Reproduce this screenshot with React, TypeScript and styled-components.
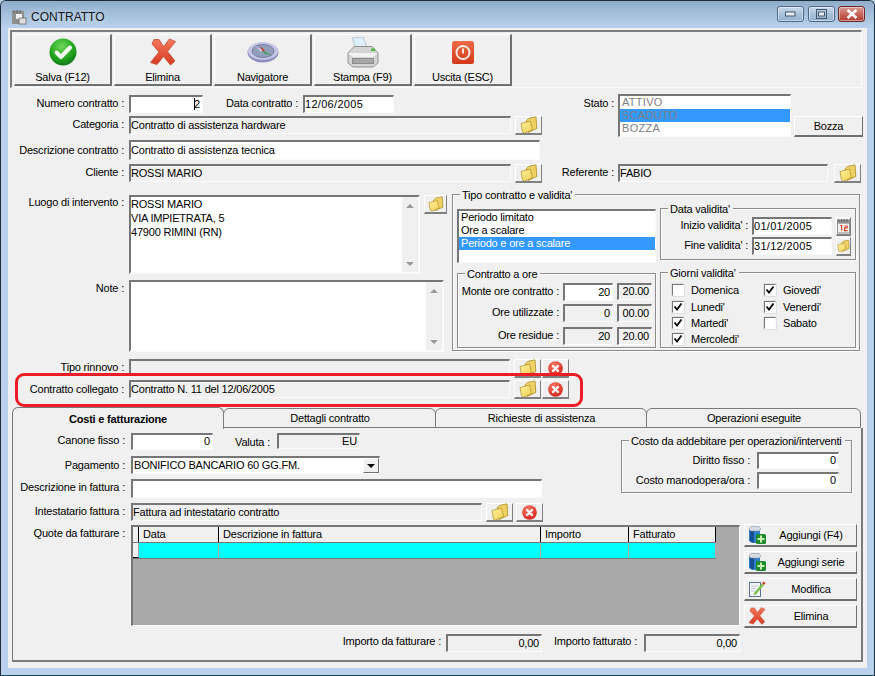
import React from 'react';
import styled, { createGlobalStyle } from 'styled-components';

const GlobalStyle = createGlobalStyle`
  html, body { margin: 0; padding: 0; background: #b9d1ea; }
  body {
    font-family: "Liberation Sans", Arial, sans-serif;
    font-size: 11px;
    letter-spacing: -0.2px;
    color: #000;
  }
  * { box-sizing: border-box; }
`;

const Window = styled.div`
  width: 875px;
  height: 676px;
  display: flex;
  flex-direction: column;
  background: #b9d1ea;
  border: 1px solid #1c2c3a;
  border-bottom-color: #0f4f5c;
  border-radius: 6px 6px 0 0;
  overflow: hidden;
`;

const TitleBar = styled.div`
  height: 27px;
  flex: none;
  display: flex;
  align-items: center;
  padding: 4px 9px 0 10px;
  background: linear-gradient(#8eabc9, #a3bed9 45%, #b9d1ea);
`;

const TitleText = styled.div`
  margin-left: 4px;
  flex: 1;
  font-size: 12px;
  letter-spacing: 0;
  color: #101820;
  text-shadow: 0 0 6px #dfeaf5;
`;

const CaptionButton = styled.div<{ $close?: boolean }>`
  width: 27px;
  height: 16px;
  margin-left: ${(p) => (p.$close ? '3px' : '4px')};
  margin-top: -6px;
  display: flex;
  align-items: center;
  justify-content: center;
  border: 1px solid ${(p) => (p.$close ? '#6b2a2a' : '#4f6a88')};
  border-radius: 3px;
  background: ${(p) =>
    p.$close
      ? 'linear-gradient(#d99c94, #c8675d 50%, #b03a30)'
      : 'linear-gradient(#c9daea, #a9c1da 50%, #94b0cf)'};
  box-shadow: inset 0 0 0 1px rgba(255, 255, 255, 0.45);
`;

const Client = styled.div`
  width: 859px;
  height: 640px;
  margin-left: 7px;
  background: #f0f0f0;
  display: flex;
  flex-direction: column;
  padding-top: 2px;
`;

const Toolbar = styled.div`
  width: 852px;
  height: 58px;
  margin-left: 2px;
  flex: none;
  display: flex;
  gap: 2px;
  padding: 2px 0 0 2px;
  border-top: 2px solid #7e7e7e;
  border-left: 2px solid #7e7e7e;
  border-right: 1px solid #fbfbfb;
  border-bottom: 1px solid #fbfbfb;
`;

const ToolButton = styled.div`
  width: 98px;
  height: 52px;
  display: flex;
  flex-direction: column;
  align-items: center;
  border-top: 1px solid #fff;
  border-left: 1px solid #fff;
  border-right: 2px solid #707070;
  border-bottom: 2px solid #707070;
`;

const ToolIcon = styled.div`
  height: 35px;
  display: flex;
  align-items: center;
  justify-content: center;
`;

const ToolLabel = styled.div`
  line-height: 13px;
  margin-top: 2px;
`;

const UpperGrid = styled.div`
  display: flex;
  margin-top: 6px;
  flex: none;
`;

const LeftColumn = styled.div`
  width: 537px;
  display: flex;
  flex-direction: column;
`;

const RightColumn = styled.div`
  flex: 1;
  display: flex;
  flex-direction: column;
`;

const Row = styled.div<{ $h: number; $mt?: number }>`
  display: flex;
  align-items: flex-start;
  height: ${(p) => p.$h}px;
  margin-top: ${(p) => p.$mt ?? 0}px;
  flex: none;
  position: relative;
`;

const Label = styled.div<{ $w: number; $gap?: number; $top?: number }>`
  width: ${(p) => p.$w}px;
  margin-right: ${(p) => p.$gap ?? 5}px;
  margin-top: ${(p) => p.$top ?? 1}px;
  text-align: right;
  white-space: nowrap;
  line-height: 15px;
  flex: none;
`;

const Field = styled.div<{
  $w: number;
  $h: number;
  $ro?: boolean;
  $right?: boolean;
  $ml?: number;
  $pl?: number;
  $wide?: boolean;
}>`
  width: ${(p) => p.$w}px;
  height: ${(p) => p.$h}px;
  margin-left: ${(p) => p.$ml ?? 0}px;
  flex: none;
  background: ${(p) => (p.$ro ? '#f0f0f0' : '#fff')};
  border-style: solid;
  border-width: 2px 1px 1px 2px;
  border-color: #767676 #fbfbfb #fbfbfb #767676;
  padding: 0 ${(p) => (p.$right ? '2px' : '0')} 0 ${(p) => p.$pl ?? 0}px;
  text-align: ${(p) => (p.$right ? 'right' : 'left')};
  line-height: ${(p) => p.$h - 4}px;
  letter-spacing: ${(p) => (p.$wide ? '0.3px' : 'inherit')};
  white-space: nowrap;
  overflow: hidden;
  position: relative;
`;

const Caret = styled.span`
  border-left: 1px solid #000;
  margin-right: -1px;
`;

const IconButton = styled.div<{ $w?: number; $h?: number; $ml?: number }>`
  width: ${(p) => p.$w ?? 27}px;
  height: ${(p) => p.$h ?? 19}px;
  margin-left: ${(p) => p.$ml ?? 4}px;
  flex: none;
  display: flex;
  align-items: center;
  justify-content: center;
  border-top: 1px solid #fff;
  border-left: 1px solid #fff;
  border-right: 1px solid #808080;
  border-bottom: 2px solid #808080;
`;

const ListBox = styled.div<{ $w: number; $h: number; $mt?: number }>`
  width: ${(p) => p.$w}px;
  height: ${(p) => p.$h}px;
  margin-top: ${(p) => p.$mt ?? 0}px;
  flex: none;
  background: #fff;
  border-style: solid;
  border-width: 2px 1px 1px 2px;
  border-color: #767676 #fbfbfb #fbfbfb #767676;
`;

const ListItem = styled.div<{ $sel?: boolean; $dim?: boolean }>`
  height: 13px;
  line-height: 13px;
  padding-left: 2px;
  white-space: nowrap;
  letter-spacing: ${(p) => (p.$dim ? '0.3px' : 'inherit')};
  background: ${(p) => (p.$sel ? '#3399ff' : 'transparent')};
  color: ${(p) => (p.$dim ? '#808080' : p.$sel ? '#fff' : '#000')};
`;

const TextButton = styled.div<{ $w: number; $h: number; $ml?: number }>`
  width: ${(p) => p.$w}px;
  height: ${(p) => p.$h}px;
  margin-left: ${(p) => p.$ml ?? 0}px;
  align-self: flex-end;
  flex: none;
  display: flex;
  align-items: center;
  justify-content: center;
  border-top: 1px solid #fff;
  border-left: 1px solid #fff;
  border-right: 1px solid #707070;
  border-bottom: 2px solid #707070;
`;

const StatoRow = styled.div`
  display: flex;
  align-items: flex-start;
  height: 43px;
`;

const MiddleGrid = styled.div`
  display: flex;
  margin-top: 11px;
  flex: none;
`;

const MiddleLeft = styled.div`
  width: 444px;
  display: flex;
  flex-direction: column;
  padding-top: 1px;
`;

const MemoBox = styled.div<{ $w: number; $h: number }>`
  width: ${(p) => p.$w}px;
  height: ${(p) => p.$h}px;
  flex: none;
  display: flex;
  background: #fff;
  border-style: solid;
  border-width: 2px;
  border-color: #767676 #fbfbfb #fbfbfb #767676;
`;

const MemoText = styled.div`
  flex: 1;
  padding-left: 0;
  line-height: 14px;
  white-space: nowrap;
`;

const ScrollTrack = styled.div`
  width: 16px;
  background: #f0f0f0;
  display: flex;
  flex-direction: column;
  justify-content: space-between;
  align-items: center;
  padding: 7px 0 6px;
`;

const ScrollArrow = styled.div<{ $down?: boolean }>`
  width: 0;
  height: 0;
  border-left: 4px solid transparent;
  border-right: 4px solid transparent;
  border-bottom: ${(p) => (p.$down ? '0' : '4px solid #9a9a9a')};
  border-top: ${(p) => (p.$down ? '4px solid #9a9a9a' : '0')};
`;

const GroupBox = styled.div<{ $w: number; $h: number; $ml?: number; $mt?: number }>`
  position: relative;
  width: ${(p) => p.$w}px;
  height: ${(p) => p.$h}px;
  margin-left: ${(p) => p.$ml ?? 0}px;
  margin-top: ${(p) => p.$mt ?? 0}px;
  flex: none;
  border: 1px solid #8c8c8c;
  box-shadow: 1px 1px 0 #fbfbfb, inset 1px 1px 0 #fbfbfb;
`;

const GroupTitle = styled.div`
  position: absolute;
  left: 7px;
  top: -7px;
  padding: 0 3px 0 2px;
  line-height: 14px;
  background: #f0f0f0;
  white-space: nowrap;
`;

const TipoInner = styled.div`
  display: flex;
  gap: 4px;
  padding-left: 4px;
`;

const TipoColumn = styled.div`
  display: flex;
  flex-direction: column;
`;

const OreBody = styled.div`
  display: flex;
  flex-direction: column;
  padding-top: 9px;
`;

const DataBody = styled.div`
  display: flex;
  flex-direction: column;
  padding-top: 8px;
`;

const GiorniGrid = styled.div`
  display: grid;
  grid-template-columns: 92px 80px;
  grid-template-rows: repeat(4, 16.4px);
  grid-auto-flow: column;
  padding: 9px 0 0 11px;
`;

const CheckRow = styled.div`
  display: flex;
  align-items: center;
  gap: 7px;
  white-space: nowrap;
`;

const CheckBox = styled.div`
  width: 12px;
  height: 12px;
  background: #fff;
  border-style: solid;
  border-width: 1px;
  border-color: #767676 #fbfbfb #fbfbfb #767676;
  display: flex;
  align-items: center;
  justify-content: center;
  box-shadow: 0 0 0 0.5px #d0d0d0;
`;

const Annotation = styled.div`
  position: absolute;
  left: 7px;
  top: -7px;
  width: 568px;
  height: 34px;
  border: 3px solid #ee1c25;
  border-radius: 9px;
  pointer-events: none;
  z-index: 2;
`;

const TabStrip = styled.div`
  display: flex;
  margin: 9px 0 0 4px;
  height: 21px;
  flex: none;
  position: relative;
`;

const Tab = styled.div<{ $w: number; $active?: boolean }>`
  width: ${(p) => p.$w}px;
  display: flex;
  align-items: center;
  justify-content: center;
  flex: none;
  border: 1px solid #7b7b7b;
  border-bottom: ${(p) => (p.$active ? '0' : '1px solid #7b7b7b')};
  border-radius: 6px 6px 0 0;
  font-weight: ${(p) => (p.$active ? 700 : 400)};
  background: #f0f0f0;
  ${(p) =>
    p.$active
      ? 'height: 22px; position: relative; z-index: 1; padding-top: 1px;'
      : 'margin-left: -1px; padding-left: 1px; padding-bottom: 1px; margin-top: 1px; height: 20px;'}
`;

const TabPane = styled.div`
  width: 851px;
  height: 234px;
  margin-left: 4px;
  flex: none;
  border-left: 1px solid #7b7b7b;
  border-right: 2px solid #7b7b7b;
  border-bottom: 2px solid #7b7b7b;
  display: flex;
  flex-direction: column;
  padding-top: 5px;
`;

const PaneTop = styled.div`
  display: flex;
  flex: none;
`;

const PaneLeft = styled.div`
  width: 608px;
  display: flex;
  flex-direction: column;
`;

const CostBody = styled.div`
  display: flex;
  flex-direction: column;
  padding-top: 11px;
`;

const DropButton = styled.div`
  position: absolute;
  right: 0;
  top: 0;
  width: 16px;
  height: 15px;
  display: flex;
  align-items: center;
  justify-content: center;
  background: #f0f0f0;
  border-right: 1px solid #707070;
  border-bottom: 1px solid #707070;
  border-top: 1px solid #fff;
  border-left: 1px solid #fff;
`;

const DropArrow = styled.div`
  width: 0;
  height: 0;
  border-left: 4px solid transparent;
  border-right: 4px solid transparent;
  border-top: 4px solid #000;
`;

const QuoteRow = styled.div`
  display: flex;
  align-items: flex-start;
  margin-top: 3px;
  flex: none;
`;

const GridArea = styled.div`
  width: 609px;
  height: 101px;
  flex: none;
  background: #a9a9a9;
  border-style: solid;
  border-width: 2px 1px 1px 2px;
  border-color: #767676 #fbfbfb #fbfbfb #767676;
`;

const GridHead = styled.div`
  display: flex;
  height: 15px;
  width: 583px;
  background: #f0f0f0;
`;

const GridBodyRow = styled.div`
  display: flex;
  height: 17px;
  width: 583px;
  background: #00ffff;
  border-top: 1px solid #767676;
  border-bottom: 1px solid #767676;
`;

const HeadCell = styled.div<{ $w: number }>`
  width: ${(p) => p.$w}px;
  flex: none;
  padding-left: 4px;
  line-height: 15px;
  border-right: 1px solid #000;
  white-space: nowrap;
`;

const BodyCell = styled.div<{ $w: number; $indicator?: boolean }>`
  width: ${(p) => p.$w}px;
  flex: none;
  border-right: 1px solid #a9a9a9;
  background: ${(p) => (p.$indicator ? '#f0f0f0' : 'transparent')};
  ${(p) => (p.$indicator ? 'border-bottom: 1px solid #000;' : '')}
`;

const SideButtons = styled.div`
  display: flex;
  flex-direction: column;
  margin-left: 4px;
  margin-top: -1px;
  gap: 4px;
`;

const SideButton = styled.div`
  width: 113px;
  height: 23px;
  display: flex;
  align-items: center;
  border-top: 1px solid #fff;
  border-left: 1px solid #fff;
  border-right: 1px solid #707070;
  border-bottom: 2px solid #707070;
  padding-left: 3px;
`;

const SideLabel = styled.div`
  flex: 1;
  text-align: center;
  white-space: nowrap;
`;

const TotalsRow = styled.div`
  display: flex;
  align-items: flex-start;
  margin-top: 6px;
  flex: none;
`;

const CheckMark = () => (
  <svg width="10" height="10" viewBox="0 0 10 10">
    <path d="M1.5 4.5L4 7.5L8.5 1.5" fill="none" stroke="#000" strokeWidth="1.8" />
  </svg>
);

const SaveIcon = () => (
  <svg width="28" height="28" viewBox="0 0 28 28">
    <defs>
      <radialGradient id="saveGrad" cx="45%" cy="30%" r="75%">
        <stop offset="0" stopColor="#6fd65a" />
        <stop offset="0.6" stopColor="#22a51e" />
        <stop offset="1" stopColor="#0b6f14" />
      </radialGradient>
    </defs>
    <circle cx="14" cy="14" r="13.5" fill="url(#saveGrad)" />
    <path d="M7.5 14.5L12 19L21 9.5" fill="none" stroke="#f4fbef" strokeWidth="4" strokeLinecap="round" strokeLinejoin="round" />
  </svg>
);

const CrossIcon = ({ size = 28 }: { size?: number }) => (
  <svg width={size} height={size} viewBox="0 0 28 28">
    <defs>
      <linearGradient id="crossGrad" x1="0" y1="0" x2="0" y2="1">
        <stop offset="0" stopColor="#f27a5c" />
        <stop offset="1" stopColor="#d63a22" />
      </linearGradient>
    </defs>
    <path
      d="M5 1.5L10 1.5L14.5 8.5L20.5 1L26.5 3.5L18.5 13.5L26 23L21.5 27L14.5 18.5L8 26.5L1.5 24.5L10 14L3 6Z"
      fill="url(#crossGrad)"
      stroke="#c8452c"
      strokeWidth="0.8"
      strokeLinejoin="round"
    />
  </svg>
);

const CompassIcon = () => (
  <svg width="32" height="22" viewBox="0 0 32 22">
    <ellipse cx="16" cy="11.5" rx="15.5" ry="10" fill="#8f8fc4" />
    <ellipse cx="16" cy="10" rx="15" ry="9" fill="#c6c6e6" />
    <ellipse cx="16" cy="10" rx="11" ry="6.5" fill="#8fa0b8" stroke="#6f6f9f" strokeWidth="0.8" />
    <path d="M8 5L16 9.5L14 11Z" fill="#d0d0e6" />
    <path d="M13 5L18 9.5L15.5 10.5Z" fill="#d83a2a" />
    <path d="M15.5 9.5L26 15L17 12Z" fill="#2a9a3c" />
  </svg>
);

const PrinterIcon = () => (
  <svg width="32" height="31" viewBox="0 0 32 31">
    <path d="M5 1L16 0L20 10L10 14Z" fill="#dff0fb" stroke="#9fb6c8" strokeWidth="0.7" />
    <path d="M1 16L7 9.5H25L31 16V26L26 30H6L1 26Z" fill="#d4d4d4" stroke="#7e7e7e" strokeWidth="0.8" />
    <path d="M1 16H31L26 20H6Z" fill="#f2f2f2" />
    <path d="M5 21H27V27H5Z" fill="#8d8d8d" />
    <path d="M6 23H26M6 25H26" stroke="#cfcfcf" strokeWidth="0.8" />
    <rect x="24" y="11.5" width="4" height="2.5" fill="#58b848" />
  </svg>
);

const PowerIcon = () => (
  <svg width="22" height="23" viewBox="0 0 22 23">
    <defs>
      <linearGradient id="powerGrad" x1="0" y1="0" x2="0" y2="1">
        <stop offset="0" stopColor="#ef6a45" />
        <stop offset="1" stopColor="#d2391a" />
      </linearGradient>
    </defs>
    <rect x="0" y="0" width="22" height="23" rx="2.5" fill="url(#powerGrad)" />
    <circle cx="11" cy="11.5" r="6.5" fill="none" stroke="#fbe7df" strokeWidth="2" />
    <path d="M11 7.5V12.5" stroke="#fbe7df" strokeWidth="2" />
  </svg>
);

const FolderIcon = ({ size = 18 }: { size?: number }) => (
  <svg width={size} height={size} viewBox="0 0 18 18">
    <defs>
      <linearGradient id="folderGrad" x1="0" y1="0" x2="1" y2="1">
        <stop offset="0" stopColor="#fff0a0" />
        <stop offset="1" stopColor="#f2cf52" />
      </linearGradient>
    </defs>
    <path d="M6 5L8.5 2.5L16 0.8L16.8 12.5L8 16.5Z" fill="#efd263" stroke="#a88a2a" strokeWidth="0.8" strokeLinejoin="round" />
    <path d="M1 7.5L10.5 5L12.6 13.5L4.5 17L2.5 16Z" fill="url(#folderGrad)" stroke="#b8962e" strokeWidth="0.8" strokeLinejoin="round" />
  </svg>
);

const ClearIcon = () => (
  <svg width="15" height="15" viewBox="0 0 15 15">
    <defs>
      <radialGradient id="clearGrad" cx="40%" cy="30%" r="75%">
        <stop offset="0" stopColor="#f77c64" />
        <stop offset="1" stopColor="#d3201a" />
      </radialGradient>
    </defs>
    <circle cx="7.5" cy="7.5" r="7.3" fill="url(#clearGrad)" />
    <path d="M5 5L10 10M10 5L5 10" stroke="#fff" strokeWidth="2.4" strokeLinecap="round" />
  </svg>
);

const CalendarIcon = () => (
  <svg width="14" height="16" viewBox="0 0 14 16">
    <rect x="0.5" y="1.5" width="13" height="14" fill="#f4f4f4" stroke="#8a8a8a" />
    <rect x="0.5" y="1.5" width="13" height="4" fill="#8f8f8f" />
    <path d="M2 1V3M5 1V3M8 1V3M11 1V3" stroke="#444" />
    <path d="M3.5 7.5H5V13M8 8H11V10H8V13H11.5" fill="none" stroke="#d8401e" strokeWidth="1.2" />
  </svg>
);

const AddIcon = () => (
  <svg width="18" height="18" viewBox="0 0 18 18">
    <path d="M1 4H12V15L9 17H4L1 15Z" fill="#2f7ec8" />
    <path d="M2 4H6V16H4L2 15Z" fill="#184f94" />
    <path d="M1 3L3 0.5H11L13 3L11 5H3Z" fill="#d6dce4" stroke="#8b95a3" strokeWidth="0.6" />
    <rect x="8" y="8" width="10" height="10" rx="1.5" fill="#1e8a2c" />
    <path d="M13 9.5V16.5M9.5 13H16.5" stroke="#c8f2b0" strokeWidth="2" />
  </svg>
);

const EditIcon = () => (
  <svg width="18" height="18" viewBox="0 0 18 18">
    <rect x="1.5" y="2.5" width="11" height="14" fill="#f4f6fa" stroke="#5a6f9a" />
    <path d="M3 6H10M3 8.5H8M3 11H7" stroke="#c0c8d8" />
    <path d="M6 13L14 3.5L16 5L8 14.5L5.5 15Z" fill="#7cc04a" />
    <path d="M14 3.5L15.5 1.5L17.5 3L16 5Z" fill="#d8402c" />
  </svg>
);

const MinGlyph = () => (
  <svg width="11" height="6" viewBox="0 0 11 6">
    <rect x="0.5" y="1" width="9.5" height="4" fill="#e8eef5" stroke="#45586e" />
  </svg>
);

const MaxGlyph = () => (
  <svg width="11" height="10" viewBox="0 0 11 10">
    <rect x="0.5" y="0.5" width="10" height="9" fill="none" stroke="#45586e" />
    <rect x="2.5" y="3" width="6" height="4" fill="#e8eef5" stroke="#45586e" />
  </svg>
);

const CloseGlyph = () => (
  <svg width="14" height="10" viewBox="0 0 14 10">
    <path d="M2.5 1L11.5 9M11.5 1L2.5 9" stroke="#fff" strokeWidth="2.6" />
  </svg>
);

const AppIcon = () => (
  <svg width="16" height="16" viewBox="0 0 16 16">
    <rect x="1" y="2" width="12" height="13" fill="#8f8f8f" />
    <path d="M3 1V4M6 1V4M9 1V4" stroke="#5a5a5a" />
    <rect x="5" y="5" width="6" height="5" fill="#f6f6f6" />
    <rect x="8" y="9" width="7" height="6" fill="#dcdcdc" stroke="#5f5f5f" strokeWidth="0.7" />
  </svg>
);

const days: { name: string; on: boolean }[] = [
  { name: 'Domenica', on: false },
  { name: "Lunedi'", on: true },
  { name: "Martedi'", on: true },
  { name: "Mercoledi'", on: true },
  { name: "Giovedi'", on: true },
  { name: "Venerdi'", on: true },
  { name: 'Sabato', on: false },
];

const columns = [
  { title: '', w: 6 },
  { title: 'Data', w: 80 },
  { title: 'Descrizione in fattura', w: 322 },
  { title: 'Importo', w: 88 },
  { title: 'Fatturato', w: 87 },
];

const sideButtons = [
  { label: 'Aggiungi (F4)', icon: <AddIcon /> },
  { label: 'Aggiungi serie', icon: <AddIcon /> },
  { label: 'Modifica', icon: <EditIcon /> },
  { label: 'Elimina', icon: <CrossIcon size={18} /> },
];

const App = () => {
  return (
    <Window>
      <GlobalStyle />
      <TitleBar>
        <AppIcon />
        <TitleText>CONTRATTO</TitleText>
        <CaptionButton><MinGlyph /></CaptionButton>
        <CaptionButton><MaxGlyph /></CaptionButton>
        <CaptionButton $close><CloseGlyph /></CaptionButton>
      </TitleBar>
      <Client>
        <Toolbar>
          <ToolButton>
            <ToolIcon><SaveIcon /></ToolIcon>
            <ToolLabel>Salva (F12)</ToolLabel>
          </ToolButton>
          <ToolButton>
            <ToolIcon><CrossIcon /></ToolIcon>
            <ToolLabel>Elimina</ToolLabel>
          </ToolButton>
          <ToolButton>
            <ToolIcon><CompassIcon /></ToolIcon>
            <ToolLabel>Navigatore</ToolLabel>
          </ToolButton>
          <ToolButton>
            <ToolIcon><PrinterIcon /></ToolIcon>
            <ToolLabel>Stampa (F9)</ToolLabel>
          </ToolButton>
          <ToolButton>
            <ToolIcon><PowerIcon /></ToolIcon>
            <ToolLabel>Uscita (ESC)</ToolLabel>
          </ToolButton>
        </Toolbar>

        <UpperGrid>
          <LeftColumn>
            <Row $h={18} $mt={1}>
              <Label $w={116}>Numero contratto :</Label>
              <Field $w={74} $h={18} $right><Caret />2</Field>
              <Label $w={95}>Data contratto :</Label>
              <Field $w={91} $h={18} $wide>12/06/2005</Field>
            </Row>
            <Row $h={19} $mt={3}>
              <Label $w={116}>Categoria :</Label>
              <Field $w={382} $h={18} $ro>Contratto di assistenza hardware</Field>
              <IconButton><FolderIcon /></IconButton>
            </Row>
            <Row $h={20} $mt={5}>
              <Label $w={116} $top={3}>Descrizione contratto :</Label>
              <Field $w={411} $h={20}>Contratto di assistenza tecnica</Field>
            </Row>
            <Row $h={19} $mt={4}>
              <Label $w={116}>Cliente :</Label>
              <Field $w={382} $h={18} $ro>ROSSI MARIO</Field>
              <IconButton><FolderIcon /></IconButton>
            </Row>
          </LeftColumn>
          <RightColumn>
            <StatoRow>
              <Label $w={69} $gap={4} $top={2}>Stato :</Label>
              <ListBox $w={173} $h={43}>
                <ListItem $dim>ATTIVO</ListItem>
                <ListItem $dim $sel>SCADUTO</ListItem>
                <ListItem $dim>BOZZA</ListItem>
              </ListBox>
              <TextButton $w={69} $h={21} $ml={3}>Bozza</TextButton>
            </StatoRow>
            <Row $h={19} $mt={27}>
              <Label $w={69} $gap={4}>Referente :</Label>
              <Field $w={210} $h={18} $ro>FABIO</Field>
              <IconButton $ml={6}><FolderIcon /></IconButton>
            </Row>
          </RightColumn>
        </UpperGrid>

        <MiddleGrid>
          <MiddleLeft>
            <Row $h={79}>
              <Label $w={116} $top={0}>Luogo di intervento :</Label>
              <MemoBox $w={291} $h={79}>
                <MemoText>ROSSI MARIO<br />VIA IMPIETRATA, 5<br />47900 RIMINI (RN)</MemoText>
                <ScrollTrack><ScrollArrow /><ScrollArrow $down /></ScrollTrack>
              </MemoBox>
              <IconButton $w={23} $ml={4}><FolderIcon size={16} /></IconButton>
            </Row>
            <Row $h={72} $mt={6}>
              <Label $w={116}>Note :</Label>
              <MemoBox $w={315} $h={72}>
                <MemoText />
                <ScrollTrack><ScrollArrow /><ScrollArrow $down /></ScrollTrack>
              </MemoBox>
            </Row>
          </MiddleLeft>
          <GroupBox $w={408} $h={157}>
            <GroupTitle>Tipo contratto e validita'</GroupTitle>
            <TipoInner>
              <TipoColumn>
                <ListBox $w={199} $h={54} $mt={14}>
                  <ListItem>Periodo limitato</ListItem>
                  <ListItem>Ore a scalare</ListItem>
                  <ListItem $sel>Periodo e ore a scalare</ListItem>
                </ListBox>
                <GroupBox $w={199} $h={75} $mt={10}>
                  <GroupTitle>Contratto a ore</GroupTitle>
                  <OreBody>
                    <Row $h={18}>
                      <Label $w={101} $gap={4}>Monte ore contratto :</Label>
                      <Field $w={50} $h={18} $right>20</Field>
                      <Field $w={35} $h={17} $ro $right $ml={4}>20.00</Field>
                    </Row>
                    <Row $h={18} $mt={3}>
                      <Label $w={101} $gap={4}>Ore utilizzate :</Label>
                      <Field $w={50} $h={18} $ro $right>0</Field>
                      <Field $w={35} $h={18} $ro $right $ml={4}>00.00</Field>
                    </Row>
                    <Row $h={18} $mt={5}>
                      <Label $w={101} $gap={4}>Ore residue :</Label>
                      <Field $w={50} $h={18} $ro $right>20</Field>
                      <Field $w={35} $h={18} $ro $right $ml={4}>20.00</Field>
                    </Row>
                  </OreBody>
                </GroupBox>
              </TipoColumn>
              <TipoColumn>
                <GroupBox $w={196} $h={52} $mt={13}>
                  <GroupTitle>Data validita'</GroupTitle>
                  <DataBody>
                    <Row $h={18}>
                      <Label $w={87} $gap={4}>Inizio validita' :</Label>
                      <Field $w={80} $h={18} $wide>01/01/2005</Field>
                      <IconButton $w={15} $h={19} $ml={4}><CalendarIcon /></IconButton>
                    </Row>
                    <Row $h={18} $mt={2}>
                      <Label $w={87} $gap={4}>Fine validita' :</Label>
                      <Field $w={80} $h={18} $wide>31/12/2005</Field>
                      <IconButton $w={15} $h={19} $ml={4}><FolderIcon size={14} /></IconButton>
                    </Row>
                  </DataBody>
                </GroupBox>
                <GroupBox $w={196} $h={76} $mt={12}>
                  <GroupTitle>Giorni validita'</GroupTitle>
                  <GiorniGrid>
                    {days.map((d) => (
                      <CheckRow key={d.name}>
                        <CheckBox>{d.on && <CheckMark />}</CheckBox>
                        {d.name}
                      </CheckRow>
                    ))}
                  </GiorniGrid>
                </GroupBox>
              </TipoColumn>
            </TipoInner>
          </GroupBox>
        </MiddleGrid>

        <Row $h={18} $mt={7}>
          <Label $w={116}>Tipo rinnovo :</Label>
          <Field $w={381} $h={17} $ro />
          <IconButton $ml={4}><FolderIcon /></IconButton>
          <IconButton $ml={1}><ClearIcon /></IconButton>
        </Row>
        <Row $h={18} $mt={3}>
          <Label $w={116} $top={2}>Contratto collegato :</Label>
          <Field $w={381} $h={18} $ro>Contratto N. 11 del 12/06/2005</Field>
          <IconButton $ml={4}><FolderIcon /></IconButton>
          <IconButton $ml={1}><ClearIcon /></IconButton>
          <Annotation />
        </Row>

        <TabStrip>
          <Tab $w={212} $active>Costi e fatturazione</Tab>
          <Tab $w={213}>Dettagli contratto</Tab>
          <Tab $w={212}>Richieste di assistenza</Tab>
          <Tab $w={215}>Operazioni eseguite</Tab>
        </TabStrip>

        <TabPane>
          <PaneTop>
            <PaneLeft>
              <Row $h={17}>
                <Label $w={112} $gap={6} $top={0}>Canone fisso :</Label>
                <Field $w={82} $h={17} $right>0</Field>
                <Label $w={57} $gap={7} $top={2}>Valuta :</Label>
                <Field $w={83} $h={16} $ro $right>EU</Field>
              </Row>
              <Row $h={18} $mt={6}>
                <Label $w={112} $gap={6} $top={2}>Pagamento :</Label>
                <Field $w={249} $h={18} $pl={1}>
                  BONIFICO BANCARIO 60 GG.FM.
                  <DropButton><DropArrow /></DropButton>
                </Field>
              </Row>
              <Row $h={19} $mt={5}>
                <Label $w={112} $gap={6}>Descrizione in fattura :</Label>
                <Field $w={411} $h={19} />
              </Row>
              <Row $h={19} $mt={5}>
                <Label $w={112} $gap={6} $top={1}>Intestatario fattura :</Label>
                <Field $w={351} $h={18} $ro>Fattura ad intestatario contratto</Field>
                <IconButton $ml={4}><FolderIcon /></IconButton>
                <IconButton $ml={3}><ClearIcon /></IconButton>
              </Row>
            </PaneLeft>
            <GroupBox $w={231} $h={53} $mt={7}>
              <GroupTitle>Costo da addebitare per operazioni/interventi</GroupTitle>
              <CostBody>
                <Row $h={17}>
                  <Label $w={128} $gap={7}>Diritto fisso :</Label>
                  <Field $w={82} $h={17} $right>0</Field>
                </Row>
                <Row $h={17} $mt={3}>
                  <Label $w={128} $gap={7}>Costo manodopera/ora :</Label>
                  <Field $w={82} $h={17} $right>0</Field>
                </Row>
              </CostBody>
            </GroupBox>
          </PaneTop>

          <QuoteRow>
            <Label $w={112} $gap={6} $top={1}>Quote da fatturare :</Label>
            <GridArea>
              <GridHead>
                {columns.map((c) => (
                  <HeadCell key={c.title || 'ind'} $w={c.w}>{c.title}</HeadCell>
                ))}
              </GridHead>
              <GridBodyRow>
                {columns.map((c, i) => (
                  <BodyCell key={c.title || 'ind'} $w={c.w} $indicator={i === 0} />
                ))}
              </GridBodyRow>
            </GridArea>
            <SideButtons>
              {sideButtons.map((b) => (
                <SideButton key={b.label}>
                  {b.icon}
                  <SideLabel>{b.label}</SideLabel>
                </SideButton>
              ))}
            </SideButtons>
          </QuoteRow>

          <TotalsRow>
            <Label $w={428} $gap={5} $top={0}>Importo da fatturare :</Label>
            <Field $w={96} $h={18} $ro $right>0,00</Field>
            <Label $w={95} $gap={7} $top={0}>Importo fatturato :</Label>
            <Field $w={96} $h={18} $ro $right>0,00</Field>
          </TotalsRow>
        </TabPane>
      </Client>
    </Window>
  );
};

export default App;
